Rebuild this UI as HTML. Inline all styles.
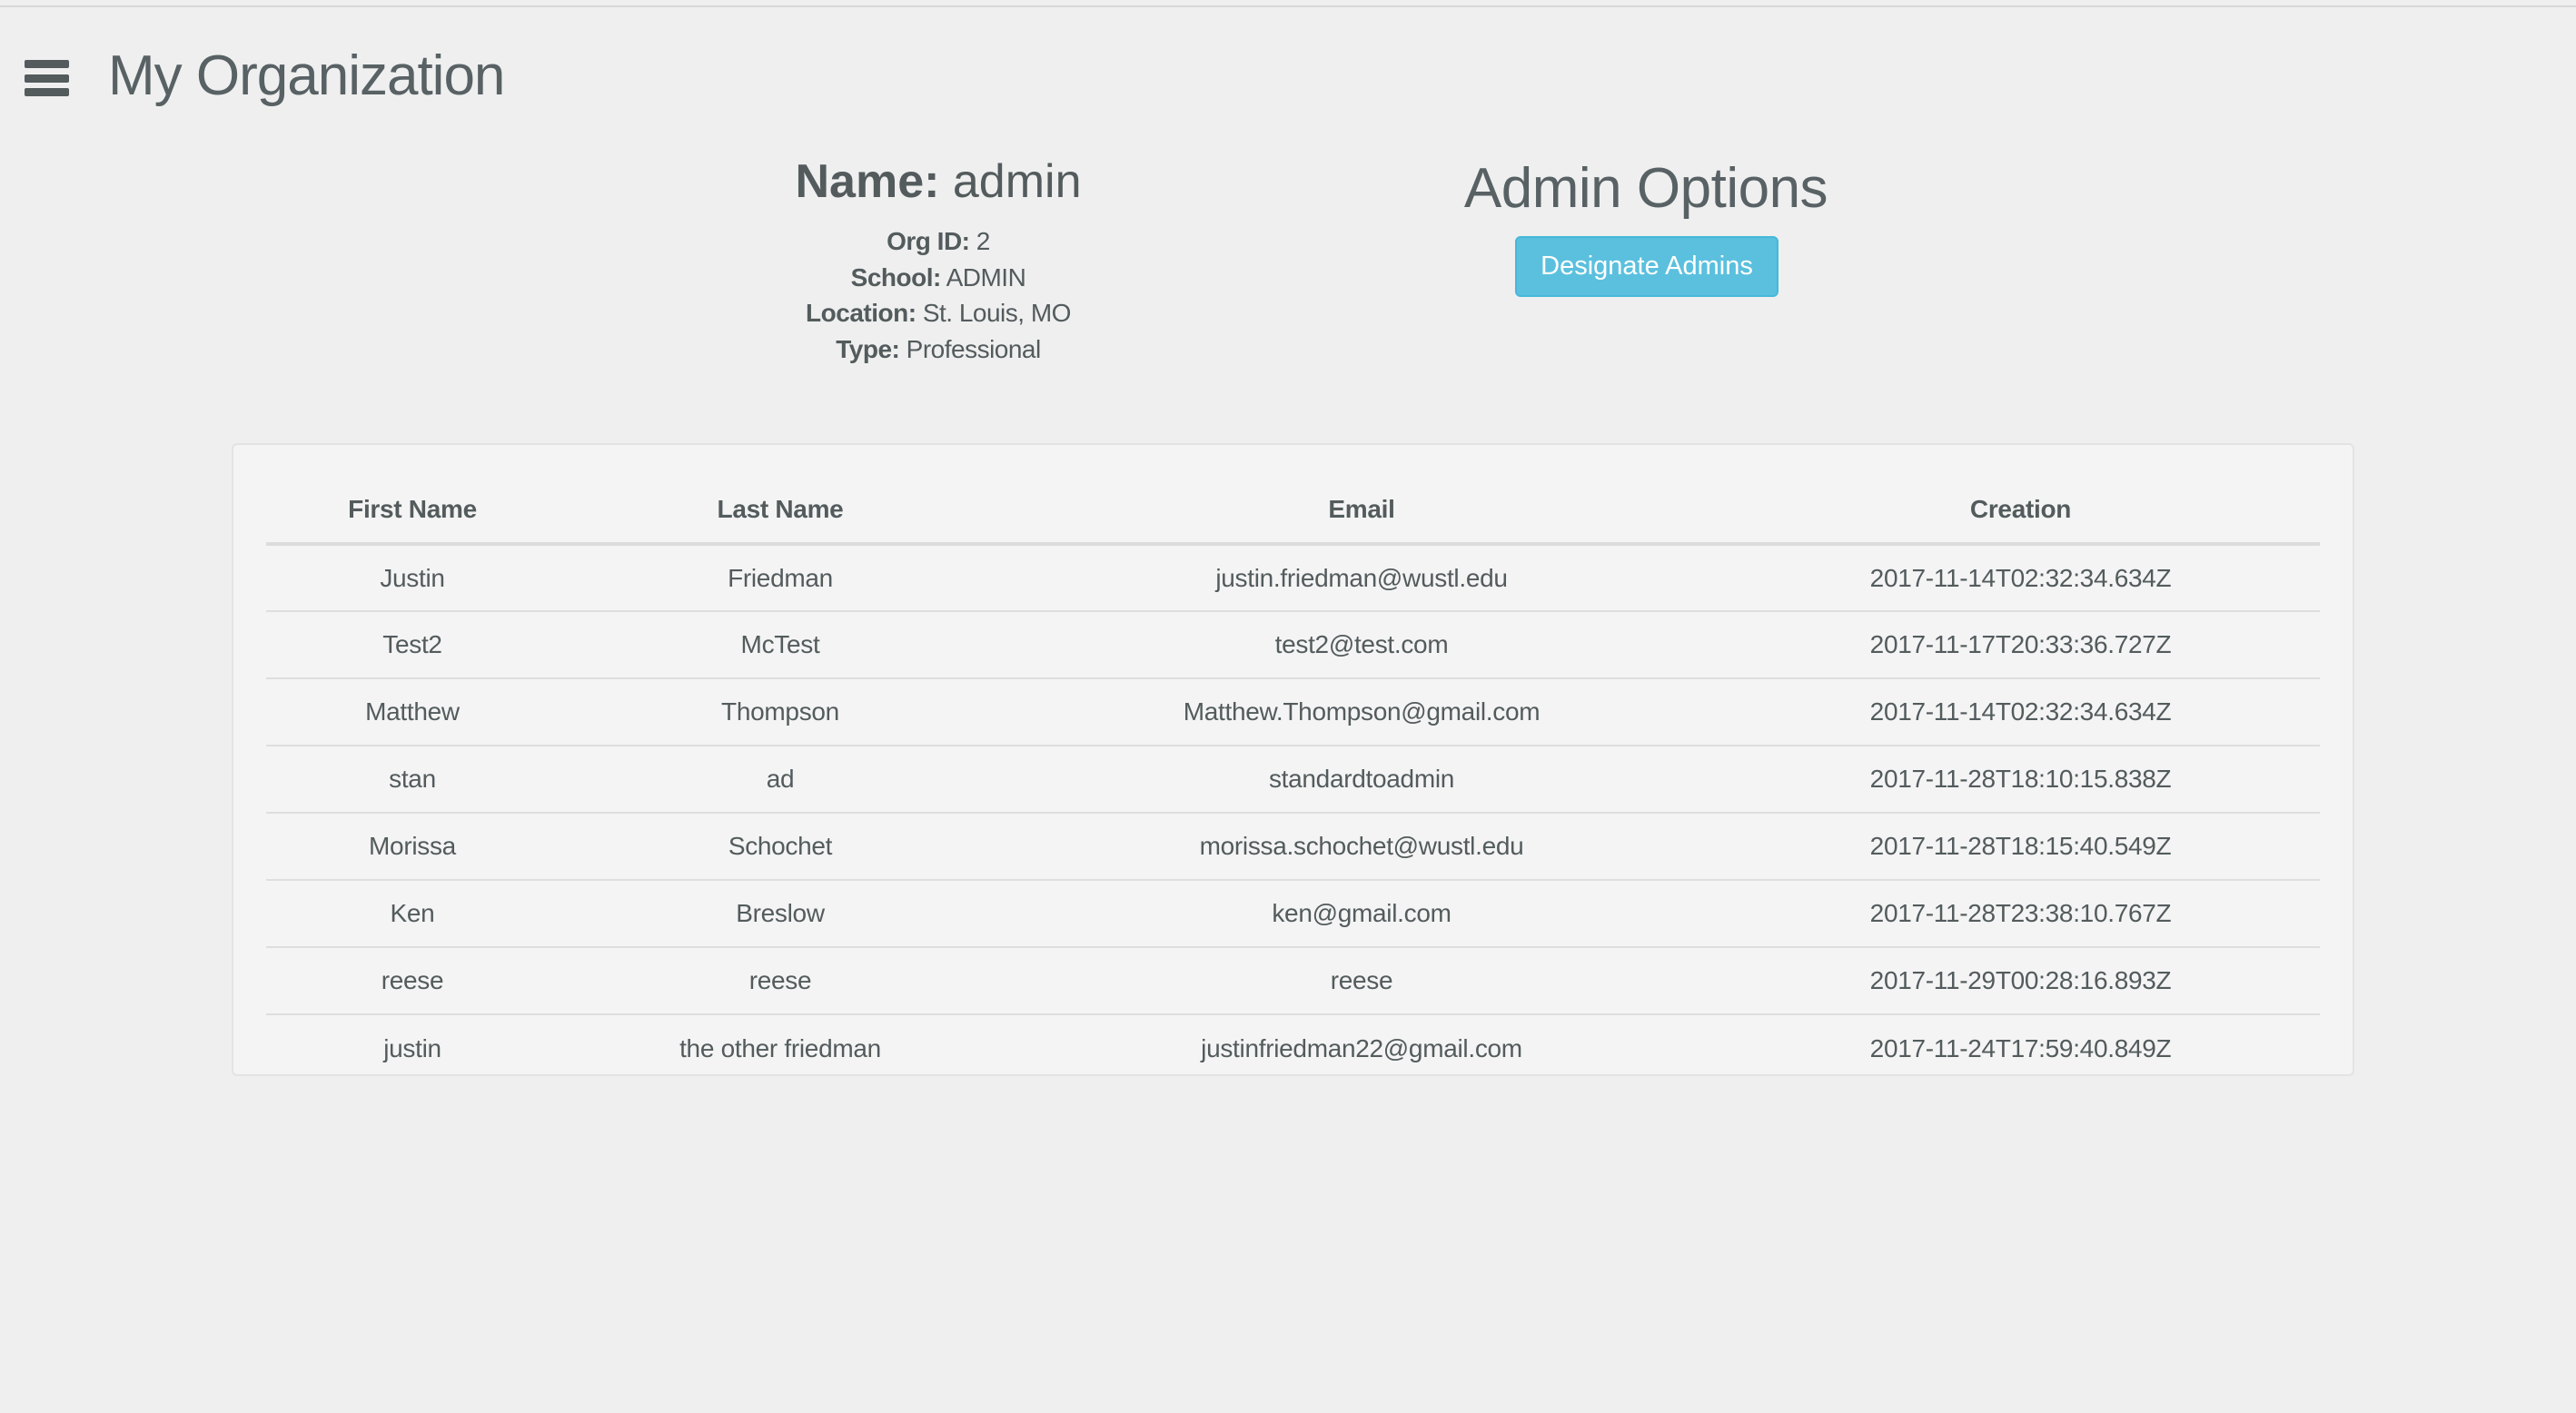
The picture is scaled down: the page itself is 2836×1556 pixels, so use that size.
<!DOCTYPE html>
<html><head><meta charset="utf-8"><style>
*{margin:0;padding:0;box-sizing:border-box}
body{width:2836px;height:1556px;background:#efefef;font-family:"Liberation Sans",sans-serif;color:#535b5d;position:relative;overflow:hidden}
.abs{position:absolute}
.topline{left:0;top:6px;width:2836px;height:2px;background:#d8d8d8}
.hb{left:27px;width:49px;height:9px;background:#535b5d;border-radius:2px}
.title{left:119px;top:44px;font-size:62px;font-weight:300;letter-spacing:-1px;line-height:80px;color:#586164}
.info{left:780px;width:506px;text-align:center}
.name{top:168px;font-size:52px;line-height:64px}
.line{font-size:28px;line-height:40px;letter-spacing:-0.5px}
.ao{left:1560px;width:504px;top:170px;text-align:center;font-size:62px;line-height:76px;color:#586164;letter-spacing:-0.5px}
.btn{left:1668px;top:260px;width:290px;height:67px;background:#5bc0de;border:2px solid #46b8da;border-radius:6px;color:#fff;font-size:29px;text-align:center;line-height:63px}
.panel{left:255px;top:488px;width:2337px;height:697px;background:#f4f4f4;border:2px solid #e3e3e3;border-radius:6px}
table{position:absolute;left:293px;top:525px;width:2261px;border-collapse:collapse;font-size:28px;letter-spacing:-0.3px}
td,th{text-align:center;padding:0}
th{height:74px;font-weight:bold;border-bottom:4px solid #dcdcdc}
td{height:74px;border-bottom:2px solid #dedede}
tr:last-child td{border-bottom:none}
</style></head><body>
<div class="abs topline"></div>
<div class="abs hb" style="top:66px"></div>
<div class="abs hb" style="top:82px"></div>
<div class="abs hb" style="top:97px"></div>
<div class="abs title">My Organization</div>
<div class="abs info name"><b>Name:</b> admin</div>
<div class="abs info line" style="top:246px"><b>Org ID:</b> 2</div>
<div class="abs info line" style="top:286px"><b>School:</b> ADMIN</div>
<div class="abs info line" style="top:325px"><b>Location:</b> St. Louis, MO</div>
<div class="abs info line" style="top:365px"><b>Type:</b> Professional</div>
<div class="abs ao">Admin Options</div>
<div class="abs btn">Designate Admins</div>
<div class="abs panel"></div>
<table>
<colgroup><col style="width:322px"><col style="width:488px"><col style="width:792px"><col style="width:659px"></colgroup>
<tr><th>First Name</th><th>Last Name</th><th>Email</th><th>Creation</th></tr>
<tr><td>Justin</td><td>Friedman</td><td>justin.friedman@wustl.edu</td><td>2017-11-14T02:32:34.634Z</td></tr>
<tr><td>Test2</td><td>McTest</td><td>test2@test.com</td><td>2017-11-17T20:33:36.727Z</td></tr>
<tr><td>Matthew</td><td>Thompson</td><td>Matthew.Thompson@gmail.com</td><td>2017-11-14T02:32:34.634Z</td></tr>
<tr><td>stan</td><td>ad</td><td>standardtoadmin</td><td>2017-11-28T18:10:15.838Z</td></tr>
<tr><td>Morissa</td><td>Schochet</td><td>morissa.schochet@wustl.edu</td><td>2017-11-28T18:15:40.549Z</td></tr>
<tr><td>Ken</td><td>Breslow</td><td>ken@gmail.com</td><td>2017-11-28T23:38:10.767Z</td></tr>
<tr><td>reese</td><td>reese</td><td>reese</td><td>2017-11-29T00:28:16.893Z</td></tr>
<tr><td>justin</td><td>the other friedman</td><td>justinfriedman22@gmail.com</td><td>2017-11-24T17:59:40.849Z</td></tr>
</table>
</body></html>
